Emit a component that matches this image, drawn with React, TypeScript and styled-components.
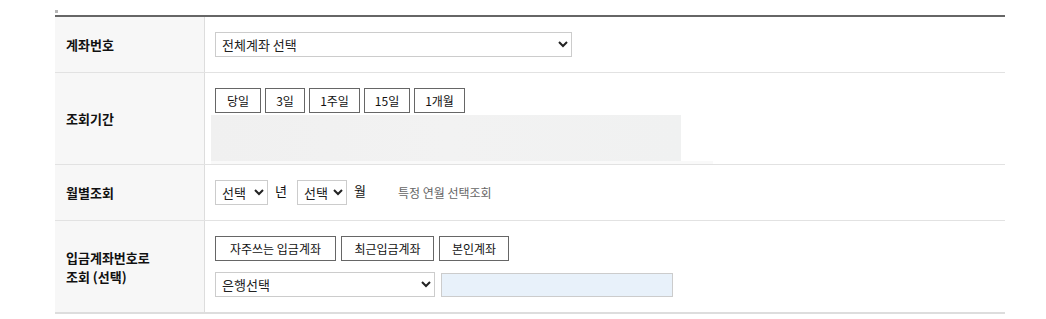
import styled, { createGlobalStyle } from "styled-components";

const GlobalStyle = createGlobalStyle`
  body {
    margin: 0;
    background: #ffffff;
    font-family: "Noto Sans CJK KR", "Noto Sans", sans-serif;
    color: #222;
  }
`;

const Page = styled.div`
  padding: 10px 41px 0 55px;
`;

const BrokenIcon = styled.span`
  display: block;
  width: 3px;
  height: 3px;
  background: #b5b5b5;
  margin-bottom: 2px;
`;

const Table = styled.div`
  border-top: 2px solid #666666;
  border-bottom: 2px solid #dddddd;
`;

const Row = styled.div`
  display: grid;
  grid-template-columns: 150px 1fr;
  min-height: ${(p: { $h: number }) => p.$h}px;
  & + & {
    border-top: 1px solid #e2e2e2;
  }
`;

const Label = styled.div`
  background: #f7f7f7;
  border-right: 1px solid #dddddd;
  display: flex;
  align-items: center;
  padding: 0 11px;
  font-size: 13px;
  font-weight: 700;
  line-height: 19px;
  color: #111;
`;

const Cell = styled.div<{ $top?: boolean }>`
  display: flex;
  flex-direction: column;
  justify-content: ${(p) => (p.$top ? "flex-start" : "center")};
  padding: ${(p) => (p.$top ? "15px 10px 0" : "0 10px")};
  gap: 11px;
`;

const Line = styled.div`
  display: flex;
  align-items: center;
`;

const Select = styled.select<{ $w: number }>`
  width: ${(p) => p.$w}px;
  height: 25px;
  border: 1px solid #cccccc;
  border-radius: 0;
  background: #fff;
  font-family: "Noto Sans CJK KR", sans-serif;
  font-size: 13px;
  color: #222;
  padding: 0 2px;
`;

const Buttons = styled.div`
  display: flex;
  gap: 4px;
`;

const Btn = styled.button<{ $w: number }>`
  width: ${(p) => p.$w}px;
  height: 25px;
  border: 1px solid #666666;
  background: #fff;
  font-family: "Noto Sans CJK KR", sans-serif;
  font-size: 12px;
  color: #111;
  padding: 0;
  cursor: pointer;
`;

const Shade = styled.div`
  margin: 2px 0 0 -4px;
  width: 470px;
  height: 46px;
  background: linear-gradient(90deg, #f0f0f0, #f2f2f2 50%, #f0f1f1);
`;

const ShadeEdge = styled.div`
  margin-left: -4px;
  width: 502px;
  height: 3px;
  background: #f9f9f9;
`;

const Unit = styled.span`
  font-size: 13px;
  color: #111;
  margin: -4px 10px 0 7px;
`;

const Hint = styled.span`
  font-size: 12px;
  color: #666;
  margin-left: 22px;
`;

const AccountInput = styled.input`
  width: 232px;
  height: 24px;
  box-sizing: border-box;
  border: 1px solid #cccccc;
  background: #e8f1fa;
  margin-left: 6px;
`;

export default function App() {
  return (
    <>
      <GlobalStyle />
      <Page>
        <BrokenIcon />
        <Table>
          <Row $h={55}>
            <Label>계좌번호</Label>
            <Cell>
              <Select $w={357}>
                <option>전체계좌 선택</option>
              </Select>
            </Cell>
          </Row>
          <Row $h={90}>
            <Label>조회기간</Label>
            <Cell $top style={{ gap: 0 }}>
              <Buttons>
                <Btn $w={46}>당일</Btn>
                <Btn $w={40}>3일</Btn>
                <Btn $w={51}>1주일</Btn>
                <Btn $w={46}>15일</Btn>
                <Btn $w={51}>1개월</Btn>
              </Buttons>
              <Shade />
              <ShadeEdge />
            </Cell>
          </Row>
          <Row $h={55}>
            <Label>월별조회</Label>
            <Cell>
              <Line>
                <Select $w={53}>
                  <option>선택</option>
                </Select>
                <Unit>년</Unit>
                <Select $w={50}>
                  <option>선택</option>
                </Select>
                <Unit>월</Unit>
                <Hint>특정 연월 선택조회</Hint>
              </Line>
            </Cell>
          </Row>
          <Row $h={91}>
            <Label>
              입금계좌번호로
              <br />
              조회 (선택)
            </Label>
            <Cell $top>
              <Buttons style={{ gap: 5 }}>
                <Btn $w={121}>자주쓰는 입금계좌</Btn>
                <Btn $w={93}>최근입금계좌</Btn>
                <Btn $w={70}>본인계좌</Btn>
              </Buttons>
              <Line>
                <Select $w={220}>
                  <option>은행선택</option>
                </Select>
                <AccountInput />
              </Line>
            </Cell>
          </Row>
        </Table>
      </Page>
    </>
  );
}
